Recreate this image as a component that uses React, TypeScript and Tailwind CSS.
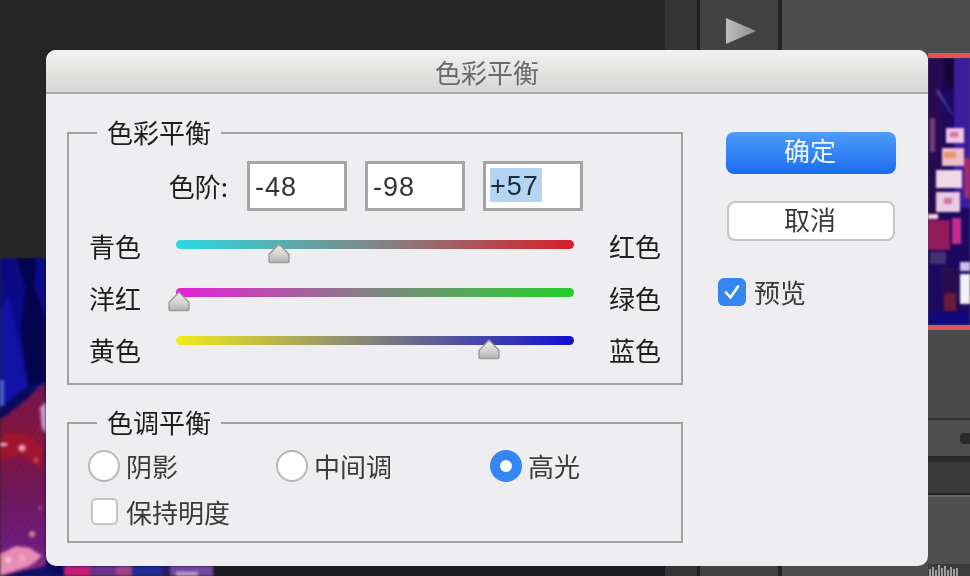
import React from "react";

const cjk = "font-['Noto_Sans_CJK_SC','Liberation_Sans',sans-serif]";

function LeftArt() {
  return (
    <svg className="block w-[213px] h-[318px] shrink-0 blur-[1.5px]" viewBox="0 0 213 318" preserveAspectRatio="none">
      <defs>
        <linearGradient id="artBlue" x1="0" y1="0" x2="0" y2="1">
          <stop offset="0" stopColor="#0a0a80" />
          <stop offset="0.55" stopColor="#0a0a90" />
          <stop offset="1" stopColor="#1414a8" />
        </linearGradient>
        <linearGradient id="artRed" x1="0" y1="0" x2="0" y2="1">
          <stop offset="0" stopColor="#7c1a50" />
          <stop offset="0.3" stopColor="#96163a" />
          <stop offset="0.55" stopColor="#7a1858" />
          <stop offset="0.85" stopColor="#7a2088" />
          <stop offset="1" stopColor="#a03890" />
        </linearGradient>
        <pattern id="artDots" width="5" height="5" patternUnits="userSpaceOnUse" patternTransform="rotate(30)">
          <rect width="5" height="5" fill="none" />
          <rect width="2" height="5" fill="#3a0a50" opacity="0.45" />
        </pattern>
      </defs>
      <rect width="213" height="318" fill="#0a0a60" />
      <rect width="46" height="130" fill="url(#artBlue)" />
      <path d="M16 0 L26 30 L20 70 L28 130 L46 125 L46 60 L34 30 L36 0 Z" fill="#04044e" />
      <path d="M0 55 L8 36 L20 95 L24 130 L0 150 Z" fill="#1212a6" />
      <rect x="0" y="122" width="4" height="26" fill="#5060e0" />
      <path d="M0 162 L26 142 L44 124 L46 140 L46 308 L0 318 Z" fill="url(#artRed)" />
      <path d="M0 162 L26 142 L44 124 L46 140 L46 308 L0 318 Z" fill="url(#artDots)" />
      <path d="M0 180 L14 174 L30 178 L42 190 L40 210 L20 196 L0 202 Z" fill="#a01430" />
      <circle cx="22" cy="190" r="3.5" fill="#f0a0b0" />
      <rect x="0" y="185" width="7" height="3" fill="#f0c0c8" />
      <circle cx="36" cy="202" r="2" fill="#d86080" />
      <circle cx="32" cy="276" r="3" fill="#e080a0" />
      <circle cx="40" cy="250" r="1.5" fill="#d080b0" />
      <path d="M0 296 L16 288 L30 290 L42 298 L30 308 L0 318 Z" fill="#e88cb4" />
      <circle cx="8" cy="302" r="3" fill="#f4c0d4" />
      <circle cx="22" cy="300" r="3" fill="#f8a8c0" />
      <path d="M40 150 L46 144 L46 176 L42 170 Z" fill="#c8a0d8" />
      <path d="M44 308 L62 318 L20 318 Z" fill="#10106a" />
      <rect x="64" y="308" width="26" height="10" fill="#c81c78" />
      <rect x="90" y="308" width="26" height="10" fill="#6a3288" />
      <rect x="116" y="308" width="16" height="10" fill="#a04488" />
      <rect x="132" y="308" width="30" height="10" fill="#202c94" />
      <rect x="162" y="308" width="8" height="10" fill="#2a1a60" />
      <rect x="170" y="308" width="43" height="10" fill="#7448a0" />
      <rect x="176" y="314" width="22" height="4" fill="#c0a8d0" />
    </svg>
  );
}

function RightArt() {
  return (
    <svg className="block w-[42px] h-[267px] blur-[1px]" viewBox="0 0 42 267" preserveAspectRatio="none">
      <rect width="42" height="267" fill="#1c0860" />
      <rect width="14" height="170" fill="#280a52" />
      <rect x="26" width="16" height="150" fill="#3a1c9c" />
      <rect x="16" y="0" width="10" height="30" fill="#14063a" />
      <path d="M10 30 L24 55 L26 60 L8 34 Z" fill="#4a3a90" />
      <rect x="2" y="60" width="5" height="34" fill="#7a3a7a" />
      <rect x="18" y="70" width="18" height="15" fill="#ecc4e4" />
      <rect x="14" y="90" width="22" height="18" fill="#f0bccc" />
      <rect x="8" y="112" width="26" height="18" fill="#f0d8e8" />
      <rect x="8" y="134" width="24" height="20" fill="#e8cce0" />
      <rect x="16" y="94" width="12" height="6" fill="#e89868" />
      <rect x="22" y="74" width="8" height="5" fill="#d870a0" />
      <rect x="16" y="140" width="8" height="6" fill="#d070a0" />
      <rect x="36" y="100" width="6" height="40" fill="#a02a70" />
      <rect x="0" y="156" width="10" height="5" fill="#f0d0e0" />
      <rect x="0" y="162" width="22" height="30" fill="#901a5c" />
      <rect x="24" y="160" width="9" height="26" fill="#c82a8c" />
      <rect x="2" y="194" width="16" height="12" fill="#453070" />
      <rect x="32" y="204" width="10" height="9" fill="#c8c0ec" />
      <rect x="32" y="216" width="10" height="30" fill="#f2f2fa" />
      <rect x="14" y="210" width="16" height="44" fill="#2a0c50" />
      <rect x="16" y="235" width="12" height="18" fill="#6a1a3c" />
      <rect y="254" width="42" height="13" fill="#10087c" />
    </svg>
  );
}

function Thumb({ left }: { left: number }) {
  return (
    <svg
      className="absolute top-[3px] w-[24px] h-[21px]"
      style={{ left }}
      viewBox="0 0 24 21"
    >
      <defs>
        <linearGradient id="thumbFill" x1="0" y1="0" x2="0" y2="1">
          <stop offset="0" stopColor="#f0ecf0" />
          <stop offset="0.55" stopColor="#d4d4d4" />
          <stop offset="1" stopColor="#b4b4b4" />
        </linearGradient>
      </defs>
      <path
        d="M12 1 L22 11.5 L22 18 Q22 19.5 20.5 19.5 L3.5 19.5 Q2 19.5 2 18 L2 11.5 Z"
        fill="url(#thumbFill)"
        stroke="#9a9a9a"
        strokeWidth="1.4"
        strokeLinejoin="round"
      />
    </svg>
  );
}

const rows = [
  {
    l: "青色",
    r: "红色",
    track: "bg-linear-to-r/srgb from-[#2bd9e0] via-[#7f8787] to-[#d81f28] mb-[3px]",
    thumb: 91,
  },
  {
    l: "洋红",
    r: "绿色",
    track: "bg-linear-to-r/srgb from-[#e620d6] via-[#808580] to-[#22d02c] mb-[11px]",
    thumb: -9,
  },
  {
    l: "黄色",
    r: "蓝色",
    track: "bg-linear-to-r/srgb from-[#f2ea1c] via-[#80807c] to-[#1010d2] mb-[19px]",
    thumb: 301,
  },
];

function Legend({ children }: { children: React.ReactNode }) {
  return (
    <div className="absolute left-[28px] top-[-15px] h-[26px] px-[10px] bg-[#eeeef0] text-[26px] leading-[26px] text-[#1e1e1e]">
      {children}
    </div>
  );
}

function Radio({ label, on, w }: { label: string; on?: boolean; w: string }) {
  return (
    <div className={`flex items-center gap-[6px] ${w}`}>
      {on ? (
        <span className="w-[32px] h-[32px] rounded-full bg-[#3585f2] flex items-center justify-center shrink-0">
          <span className="w-[12px] h-[12px] rounded-full bg-white" />
        </span>
      ) : (
        <span className="w-[32px] h-[32px] rounded-full bg-white border-2 border-[#b8b8b8] shrink-0" />
      )}
      <span className="text-[26px] leading-[32px] text-[#3a3a3a]">{label}</span>
    </div>
  );
}

export default function App() {
  return (
    <div className={`relative w-[970px] h-[576px] overflow-hidden bg-[#252525] flex blur-[0.5px] ${cjk}`}>
      {/* backdrop */}
      <div className="w-[665px] h-full flex flex-col shrink-0">
        <div className="h-[258px] bg-[#252525] shrink-0" />
        <div className="flex-1 flex overflow-hidden">
          <LeftArt />
          <div className="flex-1 flex flex-col justify-end">
            <div className="h-[10px] bg-[#1b1b1f]" />
          </div>
        </div>
      </div>
      <div className="w-[32px] h-full bg-[#333333] shrink-0" />
      <div className="w-[3px] h-full bg-[#1f1f1f] shrink-0" />
      <div className="w-[78px] h-full bg-[#424242] shrink-0 flex justify-center pt-[17px] pl-[3px]">
        <svg className="w-[32px] h-[28px]" viewBox="0 0 32 28">
          <defs>
            <linearGradient id="play" x1="0" y1="0" x2="1" y2="0">
              <stop offset="0" stopColor="#bdbdbd" />
              <stop offset="1" stopColor="#8f8f8f" />
            </linearGradient>
          </defs>
          <path d="M1 1 L31 14 L1 27 Z" fill="url(#play)" />
        </svg>
      </div>
      <div className="w-[4px] h-full bg-[#222222] shrink-0" />
      <div className="flex-1 h-full bg-[#4c4c4c] flex flex-col items-end">
        <div className="w-[42px] h-[53px] shrink-0" />
        <div className="w-[42px] h-[5px] bg-[#e2554c] shrink-0" />
        <div className="w-[42px] h-[267px] overflow-hidden shrink-0">
          <RightArt />
        </div>
        <div className="w-[42px] h-[5px] bg-[#d9585c] shrink-0" />
        <div className="w-[42px] flex-1 flex flex-col">
          <div className="h-[90px] bg-[#4a4a4a] border-b-2 border-[#333333]" />
          <div className="h-[36px] bg-[#4e4e4e] flex justify-end items-center">
            <span className="w-[10px] h-[11px] rounded-l-sm bg-[#2a2a2a]" />
          </div>
          <div className="h-[6px] bg-[#2b2b2b]" />
          <div className="h-[33px] bg-[#3a3a3a] border-b-2 border-[#222222]" />
          <div className="flex-1 bg-[#4f4f4f] border-t-2 border-[#666666]" />
          <svg className="block w-[42px] h-[12px] shrink-0" viewBox="0 0 42 12">
            <rect width="42" height="12" fill="#3c3c3c" />
            <path d="M2 12V5M5 12V3M8 12V6M11 12V1M14 12V4M17 12V2M20 12V6M23 12V3M26 12V5M29 12V4" stroke="#b8b8b8" strokeWidth="1.6" />
          </svg>
        </div>
      </div>

      {/* dialog */}
      <div className="absolute left-[46px] top-[50px] w-[882px] h-[516px] rounded-[10px] overflow-hidden bg-[#eeeef0] flex flex-col">
        <div className="h-[44px] shrink-0 bg-linear-to-b from-[#f2f2f2] to-[#d6d6d4] border-b-2 border-[#a9a9a9] text-center text-[26px] leading-[44px] text-[#6a6a6a]">
          色彩平衡
        </div>
        <div className="flex pl-[21px] pt-[38px]">
          <div className="w-[616px] shrink-0 flex flex-col gap-[37px]">
            <div className="relative h-[253px] border-2 border-[#a1a1a1] flex flex-col">
              <Legend>色彩平衡</Legend>
              <div className="flex justify-end items-center gap-[18px] pr-[98px] pt-[27px]">
                <span className="text-[26px] leading-[50px] text-[#1e1e1e] mr-[1px]">色阶:</span>
                {["-48", "-98"].map((v) => (
                  <div
                    key={v}
                    className="w-[100px] h-[50px] border-[3px] border-[#a5a5a5] bg-white pl-[5px] text-[27px] leading-[46px] tracking-[1px] text-[#333333] font-['Liberation_Sans',sans-serif]"
                  >
                    {v}
                  </div>
                ))}
                <div className="w-[100px] h-[50px] border-[3px] border-[#a5a5a5] bg-white pl-[4px] pt-[4px] text-[27px] leading-[36px] tracking-[1px] text-[#1c2c3c] font-['Liberation_Sans',sans-serif]">
                  <span className="inline-block h-[34px] w-[52px] bg-[#b4d4f4] overflow-hidden">+57</span>
                </div>
              </div>
              <div className="flex flex-col mt-[9px] pl-[20px]">
                {rows.map((r) => (
                  <div key={r.l} className="flex items-center h-[52px]">
                    <span className="w-[52px] text-[26px] leading-[32px] text-[#1e1e1e]">{r.l}</span>
                    <div className={`relative ml-[35px] w-[398px] h-[9px] rounded-full ${r.track}`}>
                      <Thumb left={r.thumb} />
                    </div>
                    <span className="ml-[35px] w-[52px] text-[26px] leading-[32px] text-[#1e1e1e]">{r.r}</span>
                  </div>
                ))}
              </div>
            </div>
            <div className="relative h-[121px] border-2 border-[#a1a1a1] pl-[19px] pt-[26px]">
              <Legend>色调平衡</Legend>
              <div className="flex">
                <Radio label="阴影" w="w-[188px]" />
                <Radio label="中间调" w="w-[214px]" />
                <Radio label="高光" on w="w-[120px]" />
              </div>
              <div className="flex items-center gap-[8px] ml-[3px] mt-[16px]">
                <span className="w-[27px] h-[27px] rounded-[5px] bg-white border-2 border-[#c4c4c4]" />
                <span className="text-[26px] leading-[27px] text-[#3a3a3a]">保持明度</span>
              </div>
            </div>
          </div>
          <div className="ml-[43px] w-[170px] flex flex-col">
            <div className="h-[42px] rounded-[8px] bg-linear-to-b from-[#4f9bf8] to-[#1a6cf0] text-center text-[26px] leading-[36px] pr-[2px] text-[#eef6ff]">
              确定
            </div>
            <div className="mt-[27px] mx-[1px] h-[40px] rounded-[8px] bg-white border-2 border-[#c4c4c4] text-center text-[26px] leading-[32px] pr-[2px] text-[#3a3a3a]">
              取消
            </div>
            <div className="mt-[37px] -ml-[8px] flex items-center gap-[8px]">
              <span className="w-[28px] h-[28px] rounded-[6px] bg-[#3585f2] flex items-center justify-center">
                <svg className="w-[20px] h-[20px]" viewBox="0 0 20 20" fill="none">
                  <path d="M4 10.5 L8.5 15.5 L16 4.5" stroke="#ffffff" strokeWidth="2.6" strokeLinecap="round" strokeLinejoin="round" />
                </svg>
              </span>
              <span className="text-[26px] leading-[28px] text-[#3a3a3a]">预览</span>
            </div>
          </div>
        </div>
      </div>
    </div>
  );
}
